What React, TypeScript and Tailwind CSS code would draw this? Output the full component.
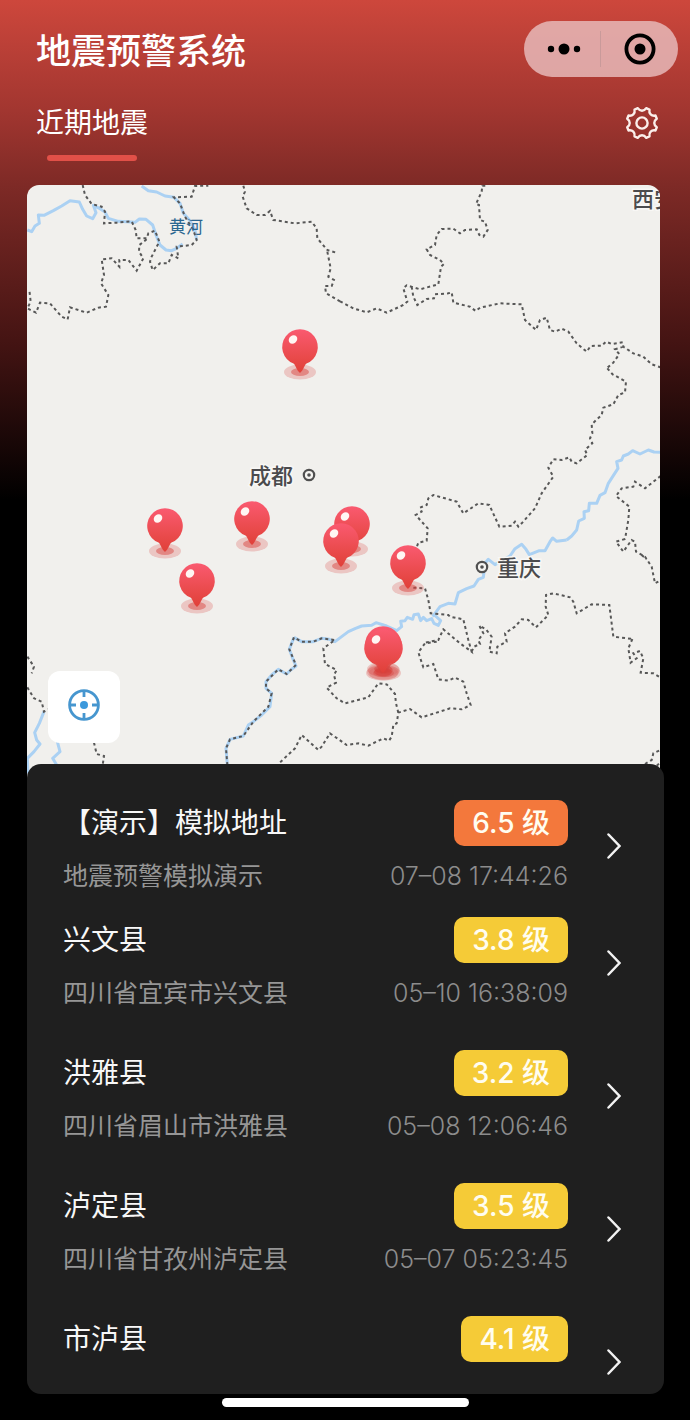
import React from "react";

type Quake = {
  name: string;
  place: string;
  time: string;
  level: string;
  severe?: boolean;
};

const quakes: Quake[] = [
  { name: "【演示】模拟地址", place: "地震预警模拟演示", time: "07–08 17:44:26", level: "6.5", severe: true },
  { name: "兴文县", place: "四川省宜宾市兴文县", time: "05–10 16:38:09", level: "3.8" },
  { name: "洪雅县", place: "四川省眉山市洪雅县", time: "05–08 12:06:46", level: "3.2" },
  { name: "泸定县", place: "四川省甘孜州泸定县", time: "05–07 05:23:45", level: "3.5" },
  { name: "市泸县", place: "", time: "", level: "4.1" },
];

const pins = [
  { x: 300, y: 347 },
  { x: 165, y: 526 },
  { x: 252, y: 519 },
  { x: 352, y: 524 },
  { x: 341, y: 541 },
  { x: 408, y: 563 },
  { x: 197, y: 581 },
  { x: 382, y: 648 },
  { x: 385, y: 648 },
  { x: 384, y: 645 },
  { x: 383, y: 644 },
  { x: 383, y: 647 },
];

// Map geometry is stored per tile, in thirds of a map unit.
const tiles = [
  {
    at: "translate(20 180) scale(0.33333)",
    rivers:
      "M22 150 L35 155 L45 138 L58 130 L55 105 L72 106 L100 92 L125 78 L150 62 L178 66 L188 88 L200 108 L218 116 L228 98 L220 76 L240 86 L255 96 L265 115 L295 124 L345 127 L358 117 L378 118 L398 135 L408 165 L420 195 L438 210 L455 212 L470 205 L488 192 M365 18 L385 32 L410 36 L435 48 L462 52 L480 70 L490 100 L510 122 L525 150 L530 180",
    borders:
      "M188 15 L195 45 L215 72 L245 80 L255 95 L252 130 L290 128 L335 124 L347 150 L350 175 L380 175 L385 160 L405 152 L418 185 L395 230 L390 245 L398 270 L420 250 L445 250 L455 225 L475 235 L470 200 L515 195 L530 180 L520 150 L495 110 L480 70 L462 52 L515 50 L525 18 L565 17 M380 178 L358 195 L357 215 L370 235 L350 272 L325 240 L298 240 L298 260 L275 235 L245 238 L252 285 L243 310 L265 345 L258 380 L235 383 L200 398 L150 382 L143 418 L125 410 L90 370 L60 368 L48 398 L22 385 L32 365 L28 330 M670 17 L675 35 L668 50 L680 85 L710 105 L735 105 L750 93 L760 120 L775 122 L825 130 L875 125 L890 145 L892 175 L922 210 L948 218 M922 215 L932 265 L925 290 L942 300 L935 318 L915 318 L918 340 L960 364",
  },
  {
    at: "translate(340 180) scale(0.33333)",
    rivers: "",
    borders:
      "M0 364 L40 385 L80 397 L110 385 L140 398 L190 375 L202 365 L190 325 L200 316 L240 328 L295 313 L303 260 L312 252 L300 240 L270 225 L260 208 L285 195 L290 165 L305 147 L340 146 L360 160 L375 150 L410 148 L418 165 L430 170 L443 150 L435 125 L420 120 L417 75 L408 72 L425 35 L427 17 L442 17 M215 320 L220 350 L232 375 L260 357 L282 355 L285 343 L325 340 L335 337 L340 368 L390 380 L407 393 L420 383 L480 370 L545 373 L555 420 L588 450 L600 420 L620 413 L630 450 L645 455 L665 446 L685 455 L710 490 L740 515 L752 498 L785 497 L798 485 L815 492 L848 487 L850 500 L880 520 L910 530 L935 553 L962 562 M850 500 L825 508 L838 522 L820 548 L802 563",
  },
  {
    at: "translate(400 340) scale(0.33333)",
    rivers:
      "M782 337 L762 336 L745 330 L720 342 L698 332 L685 342 L670 348 L665 360 L650 365 L654 385 L638 410 L625 430 L615 458 L600 466 L590 490 L568 490 L566 512 L552 515 L553 535 L536 543 L530 570 L515 588 L500 600",
    borders:
      "M622 85 L638 103 L678 125 L675 157 L655 165 L640 193 L610 203 L605 225 L575 253 L577 280 L570 295 L577 310 L555 330 L562 345 L530 370 L515 365 L508 352 L485 360 L460 358 L445 383 L460 410 L425 460 L405 505 L365 550 L355 560 L345 545 L335 557 L298 560 L268 495 L235 490 L190 520 L170 485 L100 465 L85 475 L80 495 L60 503 L65 515 L47 525 L65 545 L83 565 L80 602 L55 608 L50 622 M782 408 L735 445 L705 425 L700 440 L665 445 L648 468 L688 500 L685 540 L675 598",
  },
  {
    at: "translate(400 460) scale(0.33333)",
    rivers:
      "M500 240 L470 244 L458 234 L450 245 L435 272 L418 272 L388 284 L378 268 L365 253 L345 266 L330 288 L285 314 L265 298 L255 310 L250 352 L235 358 L222 378 L200 386 L175 398 L165 432 L145 430 L120 440 L98 470",
    borders:
      "M675 237 L648 245 L670 275 L695 240 L705 245 L708 275 L735 290 L755 320 L765 370 L780 362 M725 285 L740 298 M40 383 L75 385 L85 420 L92 460 L145 465 L150 470 L190 478 L205 540 L215 575 L180 550 L130 508 L115 540 L75 548 M215 575 L222 560 L240 552 L235 540 L250 520 L238 497 L258 508 L275 530 L268 575 L290 580 L292 560 L320 545 L315 520 L345 500 L365 478 L385 480 L408 502 L445 465 L437 440 L438 405 L460 400 L510 412 L520 425 L530 460 L575 433 L628 435 L640 530 L697 537",
  },
  {
    at: "translate(290 590) scale(0.33333)",
    rivers:
      "M430 72 L452 92 L445 106 L432 100 L425 86 L410 92 L400 82 L392 92 L385 72 L372 74 L368 88 L352 82 L345 92 L332 94 L335 110 L320 122 L290 108 L258 98 L245 106 L215 108 L195 116 L175 125 L135 155 L118 148 L95 145 L70 155 L35 155 L12 142",
    borders:
      "M440 155 L405 160 L385 187 L400 232 L430 222 L445 268 L475 272 L495 263 L520 275 L530 310 L542 345 L515 358 L480 355 L440 368 L395 382 L360 357 L325 368 L320 400 L310 405 L305 440 L297 452 L280 445 L235 467 L205 460 L170 465 L120 430 L95 470 L85 480 L35 435 L15 475 L-35 522 M325 368 L318 340 L315 312 L290 283 L265 280 L235 322 L165 340 L140 325 L110 293 L138 278 L132 255 L140 240 L105 222 L100 175 L135 150 L95 145 L70 155 L35 155 L12 142",
  },
  {
    at: "translate(470 590) scale(0.33333)",
    rivers: "",
    borders:
      "M487 147 L475 175 L482 218 L500 205 L490 190 L510 183 L520 205 L512 248 L550 250 L570 262 M525 522 L545 510 L550 490 L572 480 M560 527 L572 517",
  },
  {
    at: "translate(20 610) scale(0.33333)",
    rivers:
      "M822 82 L808 118 L818 145 L828 168 L812 180 L800 192 L775 178 L755 195 L738 215 L738 235 L755 250 L750 290 L725 315 L700 335 L685 345 L670 378 L630 388 L618 415 L622 465 M72 305 L58 340 L44 368 L50 390 L60 402 L42 425 L22 445 L24 490 M112 395 L120 425 L98 445 L110 465",
    borders:
      "M822 82 L808 118 L828 165 L800 192 L775 178 L738 215 L738 235 L755 250 L745 290 L700 335 L670 378 L630 388 L618 415 L622 465 M22 140 L42 170 L35 190 M22 232 L42 265 L65 275 L72 305 L85 298 M222 398 L230 432 L252 438 L248 465",
  },
];

const polar = (radius: number, degrees: number) => {
  const a = (degrees * Math.PI) / 180;
  return `${(radius * Math.sin(a)).toFixed(2)} ${(-radius * Math.cos(a)).toFixed(2)}`;
};

// Eight teeth, with a rounded notch centred on every multiple of 45 degrees.
const gearPath =
  Array.from({ length: 8 }, (_, i) => {
    const a = i * 45;
    return `${i ? "L" : "M"}${polar(15.4, a - 16)} C${polar(11.6, a - 10)} ${polar(11.6, a + 10)} ${polar(15.4, a + 16)}`;
  }).join(" ") + " Z";

function Pin({ x, y }: { x: number; y: number }) {
  return (
    <g transform={`translate(${x} ${y})`}>
      <ellipse cy="25" rx="16" ry="7.5" fill="#dc5a55" opacity="0.28" />
      <ellipse cy="25" rx="9" ry="4" fill="#d63a35" opacity="0.45" />
      <path
        d="M-6.5 16.6 A17.8 17.8 0 1 1 6.5 16.6 C4 18.5 3.5 23.5 0 26 C-3.5 23.5 -4 18.5 -6.5 16.6 Z"
        fill="url(#pin)"
      />
      <ellipse cx="-7" cy="-7.5" rx="4.6" ry="3.8" fill="#fff6f3" transform="rotate(-40 -7 -7.5)" />
    </g>
  );
}

function CityDot({ x, y }: { x: number; y: number }) {
  return (
    <g transform={`translate(${x} ${y})`}>
      <circle r="5.2" fill="#f5f4f1" stroke="#505050" strokeWidth="2.2" />
      <circle r="1.8" fill="#505050" />
    </g>
  );
}

function QuakeMap() {
  return (
    <svg
      viewBox="27 185 633 595"
      className="block h-auto w-full font-['Noto_Sans_CJK_SC',sans-serif]"
      role="img"
      aria-label="地震地图"
    >
      <defs>
        <linearGradient id="pin" x1="0" y1="0" x2="0" y2="1">
          <stop offset="0" stopColor="#fa5a70" />
          <stop offset="0.6" stopColor="#ea4b4d" />
          <stop offset="1" stopColor="#e04038" />
        </linearGradient>
      </defs>
      <rect x="27" y="185" width="633" height="595" fill="#f1f0ed" />
      {tiles.map((t) => (
        <path key={t.at} d={t.rivers} transform={t.at} fill="none" stroke="#abd1f3" strokeWidth="9" strokeLinejoin="round" />
      ))}
      {tiles.map((t) => (
        <path key={t.at} d={t.borders} transform={t.at} fill="none" stroke="#575757" strokeWidth="6" strokeDasharray="9 9" />
      ))}
      <g fill="#4b4b4d" stroke="#f8f7f5" strokeWidth="3" paintOrder="stroke" fontSize="22" fontWeight="500">
        <text x="249" y="484">成都</text>
        <text x="497" y="576">重庆</text>
        <text x="632" y="207">西安</text>
      </g>
      <text x="169" y="233" fontSize="17" fill="#2b6690">黄河</text>
      <CityDot x={309} y={475} />
      <CityDot x={482} y={567} />
      {pins.map((p) => (
        <Pin key={`${p.x}-${p.y}`} x={p.x} y={p.y} />
      ))}
    </svg>
  );
}

function QuakeRow({ quake }: { quake: Quake }) {
  return (
    <li className={quake.severe ? "pb-[25px]" : "pb-[41px] last:pb-0"}>
      <button type="button" className="flex w-full items-center gap-[39px] text-left">
        <span className="flex min-w-0 flex-1 flex-col gap-[14px]">
          <span className="flex items-center justify-between">
            <span className="text-[28px] leading-[46px] text-[#f8f8f8]">{quake.name}</span>
            <span
              className={`rounded-[10px] px-[18px] text-[28px] leading-[46px] font-medium text-[#fffdf0] ${
                quake.severe ? "bg-[#f3783c]" : "bg-[#f5cb37]"
              }`}
            >
              {quake.level} 级
            </span>
          </span>
          <span className="flex h-8 items-center justify-between text-[25px] leading-8">
            <span className="text-[#969696]">{quake.place}</span>
            <span className="font-light text-[#8c8c8c]">{quake.time}</span>
          </span>
        </span>
        <svg viewBox="0 0 14 26" className="h-[26px] w-[14px]" fill="none" stroke="#f2f2f2" strokeWidth="2.5" aria-hidden="true">
          <path d="M1.5 1.5 L12.5 13 L1.5 24.5" strokeLinecap="round" />
        </svg>
      </button>
    </li>
  );
}

export default function App() {
  return (
    <div className="min-h-screen bg-black bg-[linear-gradient(to_bottom,#cd473c_0px,#a23630_110px,#7e2a26_185px,#451413_340px,#000_500px)] font-[Inter,'Noto_Sans_CJK_SC',sans-serif]">
      <header className="flex items-start justify-between pt-[21px] pr-3 pl-9">
        <h1 className="text-[35px] leading-[60px] font-medium text-white">地震预警系统</h1>
        <div className="flex h-14 w-[154px] items-center rounded-full bg-[#e6b8b8]/85">
          <button type="button" aria-label="更多" className="flex h-full w-[76px] items-center justify-center pl-1">
            <svg viewBox="0 0 34 12" className="h-3 w-[34px]" aria-hidden="true">
              <circle cx="4" cy="6" r="3.2" />
              <circle cx="17" cy="6" r="5.5" />
              <circle cx="30" cy="6" r="3.2" />
            </svg>
          </button>
          <span className="h-9 w-px bg-[#c99a9a]" />
          <button type="button" aria-label="关闭" className="flex h-full flex-1 items-center justify-center">
            <svg viewBox="0 0 32 32" className="size-8" aria-hidden="true">
              <circle cx="16" cy="16" r="13.6" fill="none" stroke="#000" strokeWidth="3.8" />
              <circle cx="16" cy="16" r="5.5" />
            </svg>
          </button>
        </div>
      </header>

      <nav className="flex items-start justify-between pt-5 pr-[30px] pb-6 pl-9">
        <a href="#recent" className="flex flex-col items-center gap-[10px] text-[28px] leading-[44px] text-white">
          近期地震
          <span className="h-[6px] w-[90px] rounded-full bg-[#e15048]" />
        </a>
        <button type="button" aria-label="设置" className="mt-1">
          <svg viewBox="-18 -18 36 36" className="size-9" fill="none" stroke="#fbeeea" strokeWidth="2.4" strokeLinejoin="round" aria-hidden="true">
            <path d={gearPath} />
            <circle r="5.6" />
          </svg>
        </button>
      </nav>

      <main id="recent" className="pr-[26px] pl-[27px]">
        <section className="relative mr-1 overflow-hidden rounded-t-xl">
          <QuakeMap />
          <button
            type="button"
            aria-label="定位"
            className="absolute bottom-[37px] left-[21px] flex size-[72px] items-center justify-center rounded-xl bg-white pb-1"
          >
            <svg viewBox="0 0 32 32" className="size-8" fill="none" stroke="#4696cf" strokeWidth="2.8" aria-hidden="true">
              <circle cx="16" cy="16" r="14.4" />
              <path d="M16 1 V8 M16 24 V31 M1 16 H8 M24 16 H31" />
              <circle cx="16" cy="16" r="4" fill="#3b99dc" stroke="none" />
            </svg>
          </button>
        </section>
        <section className="relative -mt-4 flex flex-col rounded-[14px] bg-[#1f1f1f] pt-9 pr-[43px] pl-9">
          <ul className="-mb-[14px] flex flex-col">
            {quakes.map((q) => (
              <QuakeRow key={q.name} quake={q} />
            ))}
          </ul>
        </section>
      </main>
      <div className="mx-auto mt-1 h-[9px] w-[247px] rounded-full bg-white" />
    </div>
  );
}
